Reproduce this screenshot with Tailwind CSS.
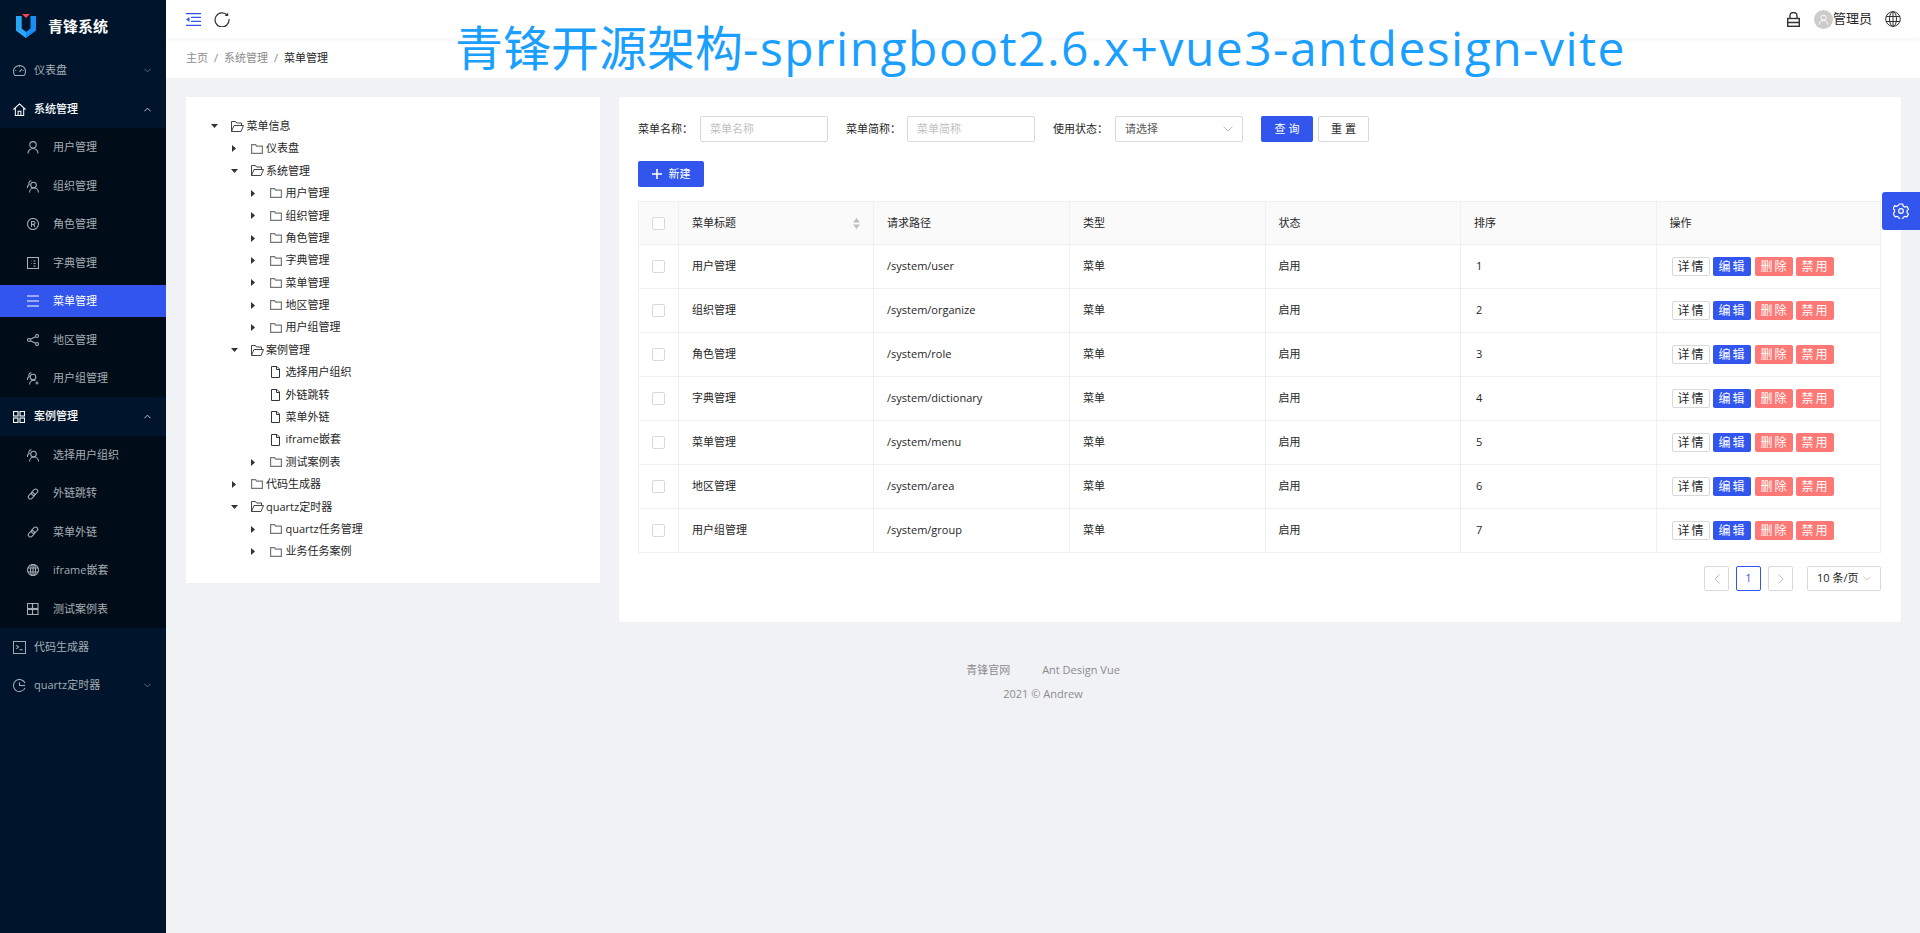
<!DOCTYPE html>
<html lang="en">
<head>
  <meta charset="UTF-8">
  <title>青锋系统</title>
  <script src="https://cdn.jsdelivr.net/npm/@tailwindcss/browser@4"></script>
</head>
<body class="bg-[#f0f2f5] font-['Open_Sans','Noto_Sans_CJK_SC',sans-serif] text-[11px] text-[#262626]">

  <!-- Big banner text over the page -->
  <div class="absolute left-[455px] top-[15px] z-20 text-[48px] leading-[65px] whitespace-nowrap text-[#1a9fff]">青锋开源架构<span class="tracking-[1.45px]">-springboot2.6.x+vue3-antdesign-vite</span></div>

  <!-- Settings tab -->
  <div class="absolute right-0 top-[192px] z-10 w-[38px] h-[38px] bg-[#3155ed] rounded-l-[3px] flex items-center justify-center">
    <svg class="w-4 h-4" viewBox="0 0 24 24" fill="none" stroke="white" stroke-width="1.8"><path d="M9.5 2h5l.8 3 2.6 1.5 3-.8 2.4 4.1-2.2 2.2v3l2.2 2.2-2.4 4.1-3-.8-2.6 1.5-.8 3h-5l-.8-3-2.6-1.5-3 .8L.1 16.200l2.200-2.200v-3L.1 8.800l2.400-4.100 3 .8L8.100 4z" transform="translate(0 -.5)"/><circle cx="12" cy="12" r="3.500"/></svg>
  </div>

  <div class="h-[933px] flex overflow-hidden">
    <!-- Sidebar -->
    <aside class="w-[166px] shrink-0 bg-[#00152b] text-[#a6adb4]">
      <div class="h-[51.500px] flex items-center pl-[16px] gap-[12px]">
        <svg class="w-[20px] h-[24px]" viewBox="0 0 20 24"><path d="M0 2l5.500 0v12.500l4.500 3.500 4.500-3.500V2H20v14.500L10 24 0 16.500z" fill="#1a8cf5"/><path d="M0 2l5.500 0v12.500l4.500 3.500V24L0 16.500z" fill="#2aa6f8"/><path d="M6 0h8l-4 4z" fill="#f5444e"/></svg>
        <span class="text-[15px] font-bold text-white">青锋系统</span>
      </div>
      <div id="menu"></div>
    </aside>

    <div class="flex-1 min-w-0">
      <!-- Top bar -->
      <header class="h-[38px] bg-white shadow-[0_1px_4px_rgba(0,21,41,0.06)] relative flex items-center pl-[20px] pr-[19px]">
        <svg class="w-[15px] h-[13px]" viewBox="0 0 15 13" fill="#3155ed"><path d="M0 0h15v1.300H0zM5 3.800h10v1.300H5zM5 7.800h10v1.300H5zM0 11.700h15V13H0zM3.500 4v5L0 6.500z"/></svg>
        <svg class="w-[16px] h-[16px] ml-[13px]" viewBox="0 0 16 16" fill="none" stroke="#333" stroke-width="1.200"><path d="M13.500 4.500A7 7 0 1 0 15 8"/><path d="M14.200 1.500v3.500h-3.500" fill="#333" stroke="none"/></svg>
        <div class="ml-auto flex items-center">
          <svg class="w-[13px] h-[15px]" viewBox="0 0 13 15" fill="none" stroke="#333" stroke-width="1.400"><rect x=".7" y="6.500" width="11.600" height="7.800"/><path d="M3 6.500V3.500a3.500 3 0 0 1 7 0v3M.7 10.500h11.600"/></svg>
          <span class="ml-[14px] w-[19px] h-[19px] rounded-full bg-[#ccc] flex items-center justify-center">
            <svg class="w-[11px] h-[11px]" viewBox="0 0 12 12" fill="none" stroke="white"><circle cx="6" cy="4" r="2.800"/><path d="M1.500 11.500a4.500 4.500 0 0 1 9 0"/></svg>
          </span>
          <span class="text-[13px] text-[#262626]">管理员</span>
          <svg class="w-[16px] h-[16px] ml-[13px]" viewBox="0 0 16 16" fill="none" stroke="#333"><circle cx="8" cy="8" r="7.300"/><ellipse cx="8" cy="8" rx="3.500" ry="7.300"/><path d="M8 .7v14.600M1 5.500h14M1 10.500h14"/></svg>
        </div>
      </header>

      <!-- Breadcrumb -->
      <div class="h-[40px] bg-white flex items-center pl-[20px] text-[#8c8c8c]">
        <span>主页</span><span class="mx-[6px]">/</span><span>系统管理</span><span class="mx-[6px]">/</span><span class="text-[#262626]">菜单管理</span>
      </div>

      <div class="pt-[19px] pl-[20px] pr-[19px] flex items-start gap-[19px]">
        <!-- Menu tree -->
        <section class="w-[414px] h-[486px] shrink-0 bg-white pl-[18px] pt-[18px]" id="tree"></section>

        <!-- List card -->
        <section class="flex-1 h-[525px] bg-white rounded-[2px] pl-[19px] pr-[20px] pt-[19px]">
          <form class="flex items-center h-[26px] text-[#262626]">
            <label class="w-[62px]">菜单名称：</label>
            <div class="w-[128px] h-[26px] border border-[#d9d9d9] rounded-[2px] pl-[9px] flex items-center text-[#bfbfbf]">菜单名称</div>
            <label class="ml-[18px] w-[61px]">菜单简称：</label>
            <div class="w-[128px] h-[26px] border border-[#d9d9d9] rounded-[2px] pl-[9px] flex items-center text-[#bfbfbf]">菜单简称</div>
            <label class="ml-[18px] w-[62px]">使用状态：</label>
            <div class="w-[128px] h-[26px] border border-[#d9d9d9] rounded-[2px] px-[9px] flex items-center justify-between text-[#595959]">请选择
              <svg class="w-[10px] h-[6px]" viewBox="0 0 10 6" fill="none" stroke="#bfbfbf"><path d="M.5.5L5 5 9.500.5"/></svg>
            </div>
            <button type="button" class="ml-[18px] w-[52px] h-[26px] bg-[#3155ed] text-white rounded-[2px]">查 询</button>
            <button type="button" class="ml-[5px] w-[51px] h-[26px] border border-[#d9d9d9] rounded-[2px]">重 置</button>
          </form>

          <button class="mt-[19px] w-[66px] h-[26px] bg-[#3155ed] text-white rounded-[2px] flex items-center justify-center gap-[7px]">
            <svg class="w-[10px] h-[10px]" viewBox="0 0 10 10" fill="white"><path d="M4.200 0h1.600v4.200H10v1.600H5.800V10H4.200V5.800H0V4.200h4.200z"/></svg>
            新建
          </button>

          <table class="mt-[14px] w-[1243px] table-fixed border-collapse">
            <colgroup>
              <col class="w-[40px]"><col class="w-[195px]"><col class="w-[196px]"><col class="w-[195.500px]"><col class="w-[195.500px]"><col class="w-[195.500px]"><col>
            </colgroup>
            <thead>
              <tr class="h-[43px] bg-[#fafafa] text-left">
                <th class="border border-[#f0f0f0]"><div class="mx-auto w-[13px] h-[13px] border border-[#d9d9d9] rounded-[2px] bg-white"></div></th>
                <th class="border border-[#f0f0f0] pl-[13px] pr-[13px] font-normal">
                  <div class="flex items-center justify-between">菜单标题
                    <svg class="w-[7px] h-[11px]" viewBox="0 0 7 11" fill="#bfbfbf"><path d="M3.500 0L7 4.500H0zM0 6.500h7L3.500 11z"/></svg>
                  </div>
                </th>
                <th class="border border-[#f0f0f0] pl-[13px] font-normal">请求路径</th>
                <th class="border border-[#f0f0f0] pl-[13px] font-normal">类型</th>
                <th class="border border-[#f0f0f0] pl-[13px] font-normal">状态</th>
                <th class="border border-[#f0f0f0] pl-[13px] font-normal">排序</th>
                <th class="border border-[#f0f0f0] pl-[13px] font-normal">操作</th>
              </tr>
            </thead>
            <tbody id="rows"></tbody>
          </table>

          <!-- Pagination -->
          <div class="mt-[13px] flex justify-end items-center">
            <div class="w-[25px] h-[25px] border border-[#d9d9d9] rounded-[2px] flex items-center justify-center">
              <svg class="w-[6px] h-[10px]" viewBox="0 0 6 10" fill="none" stroke="#bfbfbf"><path d="M5.500.5L1 5l4.500 4.500"/></svg>
            </div>
            <div class="ml-[7px] w-[25px] h-[25px] border border-[#3155ed] rounded-[2px] flex items-center justify-center text-[#3155ed]">1</div>
            <div class="ml-[7px] w-[25px] h-[25px] border border-[#d9d9d9] rounded-[2px] flex items-center justify-center">
              <svg class="w-[6px] h-[10px]" viewBox="0 0 6 10" fill="none" stroke="#bfbfbf"><path d="M.5.5L5 5 .5 9.500"/></svg>
            </div>
            <div class="ml-[14px] w-[74px] h-[25px] border border-[#d9d9d9] rounded-[2px] pl-[9px] pr-[9px] flex items-center justify-between">10 条/页
              <svg class="w-[8px] h-[5px]" viewBox="0 0 10 6" fill="none" stroke="#bfbfbf"><path d="M.5.5L5 5 9.500.5"/></svg>
            </div>
          </div>
        </section>
      </div>

      <!-- Footer -->
      <footer class="mt-[40px] text-center text-[#8c8c8c] relative">
        <div class="leading-[16px]"><span>青锋官网</span><span class="ml-[32px]">Ant Design Vue</span></div>
        <div class="mt-[8px] leading-[16px]">2021 © Andrew</div>
      </footer>
    </div>
  </div>

  <script>
    // Icons for the side menu
    const s = 'fill="none" stroke="currentColor" stroke-width="1.100"';
    const icons = {
      dashboard: `<svg class="w-[13px] h-[13px]" viewBox="0 0 14 14" ${s}><path d="M2.300 12.500a6.500 6.500 0 1 1 9.400 0z"/><path d="M7 8.500l2.500-3M2.500 7h1M10.500 7h1M7 2.500v1"/></svg>`,
      home: `<svg class="w-[13px] h-[13px]" viewBox="0 0 14 14" ${s}><path d="M.5 7L7 1l6.500 6M2.500 5.500v8h9v-8M5.500 13.500V9h3v4.500"/></svg>`,
      user: `<svg class="w-[12px] h-[13px]" viewBox="0 0 12 13" ${s}><circle cx="6" cy="3.800" r="3.200"/><path d="M1 12.500a5 5 0 0 1 10 0"/></svg>`,
      team: `<svg class="w-[12px] h-[13px]" viewBox="0 0 12 13" ${s}><circle cx="6.500" cy="5" r="2.800"/><path d="M2.500 12.500a4.300 4.300 0 0 1 9 0M4.500 .8a2.500 2.500 0 0 0-2.300 3.700 3.500 3.500 0 0 0-1.700 3.500"/></svg>`,
      group: `<svg class="w-[12px] h-[13px]" viewBox="0 0 12 13" ${s}><circle cx="6" cy="5" r="2.800"/><path d="M2.500 12.500a4.300 4.300 0 0 1 6-4M4.500 .8a2.500 2.500 0 0 0-2.300 3.700 3.500 3.500 0 0 0-1.700 3.500M10 9.500v3M8.500 11h3"/></svg>`,
      role: `<svg class="w-[12px] h-[12px]" viewBox="0 0 12 12" ${s}><circle cx="6" cy="6" r="5.500"/><path d="M4.500 9V3.500H6.500a1.400 1.400 0 0 1 0 2.900H4.500M6.500 6.400L8 9"/></svg>`,
      dict: `<svg class="w-[12px] h-[12px]" viewBox="0 0 12 12" ${s}><rect x=".5" y=".5" width="11" height="11"/><path d="M6.500 4H8.500M6.500 6.500H8.500M6.500 9H8.500M4 4h.5M4 6.500h.5"/></svg>`,
      menu: `<svg class="w-[12px] h-[12px]" viewBox="0 0 12 12" fill="none" stroke="white" stroke-width="1.200"><path d="M0 1h12M0 6h12M0 11h12"/></svg>`,
      share: `<svg class="w-[12px] h-[12px]" viewBox="0 0 12 12" ${s}><circle cx="2" cy="6" r="1.500"/><circle cx="10" cy="2" r="1.500"/><circle cx="10" cy="10" r="1.500"/><path d="M3.300 5.300l5.400-2.600M3.300 6.700l5.400 2.600"/></svg>`,
      apps: `<svg class="w-[12px] h-[12px]" viewBox="0 0 12 12" ${s}><rect x=".5" y=".5" width="4.500" height="4.500"/><rect x="7" y=".5" width="4.500" height="4.500"/><rect x=".5" y="7" width="4.500" height="4.500"/><rect x="7" y="7" width="4.500" height="4.500"/></svg>`,
      tiles: `<svg class="w-[12px] h-[12px]" viewBox="0 0 12 12" ${s}><rect x=".5" y=".5" width="5" height="5"/><rect x="5.500" y=".5" width="5.500" height="5"/><rect x=".5" y="6.500" width="5" height="5"/><rect x="5.500" y="6.500" width="5.500" height="5"/></svg>`,
      link: `<svg class="w-[12px] h-[12px]" viewBox="0 0 12 12" ${s}><rect x="5.500" y=".7" width="4.200" height="7" rx="2.100" transform="rotate(45 7.600 4.200)"/><rect x="2.300" y="4.300" width="4.200" height="7" rx="2.100" transform="rotate(45 4.400 7.800)"/></svg>`,
      globe: `<svg class="w-[12px] h-[12px]" viewBox="0 0 12 12" ${s}><circle cx="6" cy="6" r="5.500"/><ellipse cx="6" cy="6" rx="2.500" ry="5.500"/><path d="M6 .5v11M1 4h10M1 8h10"/></svg>`,
      code: `<svg class="w-[13px] h-[13px]" viewBox="0 0 14 14" ${s}><rect x=".5" y=".5" width="13" height="13"/><path d="M3.500 4.500l2.500 2-2.500 2M7 9.500h3.500"/></svg>`,
      clock: `<svg class="w-[13px] h-[13px]" viewBox="0 0 14 14" ${s}><path d="M13 9.500A6.500 6.500 0 1 1 13 4.500M7 3.500V7h6"/></svg>`,
    };
    const chevDown = `<svg class="w-[7px] h-[5px]" viewBox="0 0 8 5" fill="none" stroke="#6b7580"><path d="M.5.5L4 4 7.500.5"/></svg>`;
    const chevUp = `<svg class="w-[7px] h-[5px]" viewBox="0 0 8 5" fill="none" stroke="#d9dce0"><path d="M.5 4.500L4 1l3.500 3.500"/></svg>`;

    // Side menu
    const menu = [
      { t: "仪表盘", i: "dashboard", c: "down" },
      { t: "系统管理", i: "home", c: "up", open: true, kids: [
        ["用户管理", "user"], ["组织管理", "team"], ["角色管理", "role"], ["字典管理", "dict"],
        ["菜单管理", "menu", true], ["地区管理", "share"], ["用户组管理", "group"],
      ]},
      { t: "案例管理", i: "apps", c: "up", open: true, kids: [
        ["选择用户组织", "team"], ["外链跳转", "link"], ["菜单外链", "link"], ["iframe嵌套", "globe"], ["测试案例表", "tiles"],
      ]},
      { t: "代码生成器", i: "code" },
      { t: "quartz定时器", i: "clock", c: "down" },
    ];
    document.getElementById("menu").innerHTML = menu.map(m => `
      <div class="h-[38.450px] flex items-center pl-[13px] pr-[15px] ${m.open ? "text-white font-medium" : ""}">
        <span class="w-[21px] flex">${icons[m.i]}</span><span>${m.t}</span>
        <span class="ml-auto">${m.c === "down" ? chevDown : m.c === "up" ? chevUp : ""}</span>
      </div>
      ${m.kids ? `<div class="bg-[#000c17]">${m.kids.map(k => `
        <div class="h-[38.450px] flex items-center">
          <div class="w-full h-[32px] flex items-center pl-[27px] ${k[2] ? "bg-[#3155ed] text-white" : ""}">
            <span class="w-[26px] flex">${icons[k[1]]}</span><span>${k[0]}</span>
          </div>
        </div>`).join("")}</div>` : ""}
    `).join("");

    // Tree (level, label, state: open / closed / leaf)
    const tree = [
      [0, "菜单信息", "open"], [1, "仪表盘", "closed"], [1, "系统管理", "open"],
      [2, "用户管理", "closed"], [2, "组织管理", "closed"], [2, "角色管理", "closed"], [2, "字典管理", "closed"],
      [2, "菜单管理", "closed"], [2, "地区管理", "closed"], [2, "用户组管理", "closed"],
      [1, "案例管理", "open"], [2, "选择用户组织", "leaf"], [2, "外链跳转", "leaf"], [2, "菜单外链", "leaf"],
      [2, "iframe嵌套", "leaf"], [2, "测试案例表", "closed"], [1, "代码生成器", "closed"],
      [1, "quartz定时器", "open"], [2, "quartz任务管理", "closed"], [2, "业务任务案例", "closed"],
    ];
    const indent = ["pl-[7px]", "pl-[26.500px]", "pl-[46px]"];
    const arrows = {
      open: `<svg class="w-[7px] h-[4px]" viewBox="0 0 7 4" fill="#333"><path d="M0 0h7L3.500 4z"/></svg>`,
      closed: `<svg class="w-[4px] h-[7px] ml-[1px]" viewBox="0 0 4 7" fill="#333"><path d="M0 0l4 3.500L0 7z"/></svg>`,
      leaf: "",
    };
    const nodeIcons = {
      open: `<svg class="w-[13px] h-[11px]" viewBox="0 0 13 11" fill="none" stroke="#444"><path d="M.5 10.500V.5h4l1 1.500h5v2M.5 10.500h9.500L12.500 4.500H3z"/></svg>`,
      closed: `<svg class="w-[12px] h-[10px]" viewBox="0 0 12 10" fill="none" stroke="#777" stroke-width="1.200"><path d="M.6.6h4l1 1.500h5.800v7.300H.6z"/></svg>`,
      leaf: `<svg class="w-[9px] h-[12px] ml-[1px] mr-[3px]" viewBox="0 0 9 12" fill="none" stroke="#333"><path d="M.5.5h5.500L8.500 3v8.500h-8zM5.500.5V3.500h3"/></svg>`,
    };
    document.getElementById("tree").innerHTML = tree.map(([lvl, label, st]) => `
      <div class="h-[22.400px] flex items-center ${indent[lvl]}">
        <span class="w-[20px] flex items-center">${arrows[st]}</span>
        <span class="w-[15.500px] flex items-center">${nodeIcons[st]}</span>
        <span class="whitespace-nowrap">${label}</span>
      </div>`).join("");

    // Table rows
    const rows = [
      ["用户管理", "/system/user"], ["组织管理", "/system/organize"], ["角色管理", "/system/role"], ["字典管理", "/system/dictionary"],
      ["菜单管理", "/system/menu"], ["地区管理", "/system/area"], ["用户组管理", "/system/group"],
    ];
    document.getElementById("rows").innerHTML = rows.map((r, i) => `
      <tr class="h-[44px]">
        <td class="border border-[#f0f0f0]"><div class="mx-auto w-[13px] h-[13px] border border-[#d9d9d9] rounded-[2px]"></div></td>
        <td class="border border-[#f0f0f0] pl-[13px]">${r[0]}</td>
        <td class="border border-[#f0f0f0] pl-[13px]">${r[1]}</td>
        <td class="border border-[#f0f0f0] pl-[13px]">菜单</td>
        <td class="border border-[#f0f0f0] pl-[13px]">启用</td>
        <td class="border border-[#f0f0f0] pl-[15px]">${i + 1}</td>
        <td class="border border-[#f0f0f0] pl-[15px]">
          <div class="flex gap-[3px] text-[12px] tracking-[2px]">
            <button class="w-[38px] h-[19px] pl-[2px] border border-[#d9d9d9] rounded-[2px] text-[#262626]">详情</button>
            <button class="w-[38px] h-[19px] pl-[2px] bg-[#3155ed] rounded-[2px] text-white">编辑</button>
            <button class="w-[38px] h-[19px] pl-[2px] ml-[1px] bg-[#ff7875] rounded-[2px] text-white">删除</button>
            <button class="w-[38px] h-[19px] pl-[2px] bg-[#ff7875] rounded-[2px] text-white">禁用</button>
          </div>
        </td>
      </tr>`).join("");
  </script>
</body>
</html>
